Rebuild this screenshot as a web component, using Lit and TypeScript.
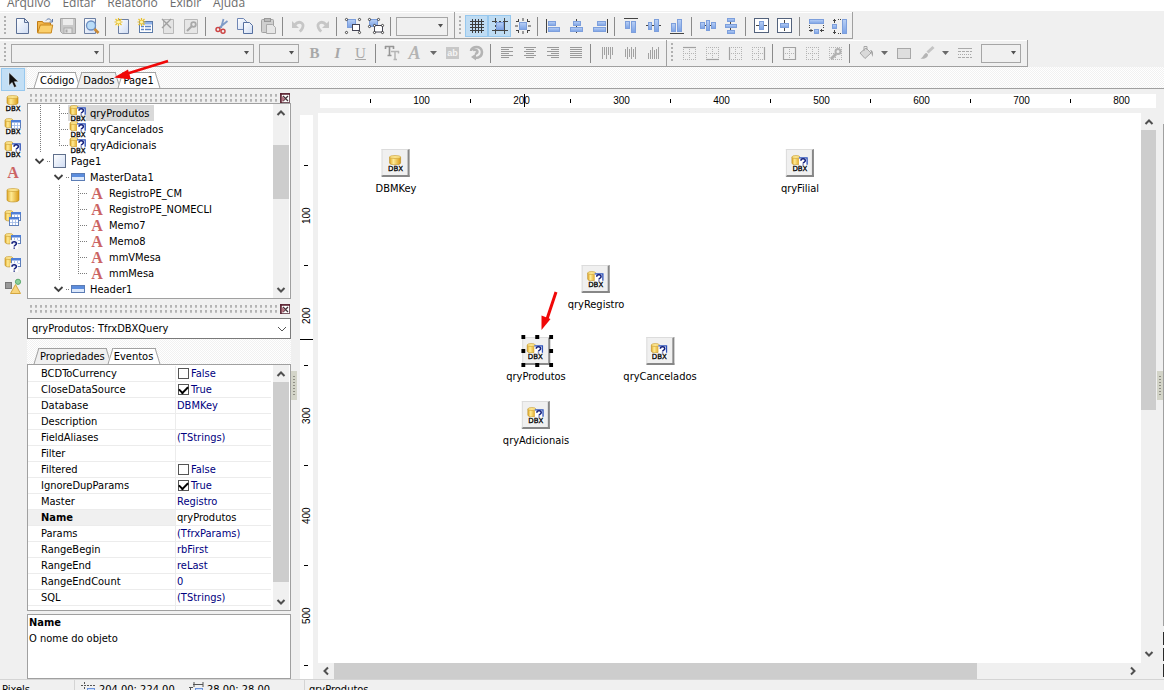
import { LitElement, html, svg, css, TemplateResult, SVGTemplateResult } from "lit";
import { customElement, state } from "lit/decorators.js";
import { classMap } from "lit/directives/class-map.js";

type Shape = SVGTemplateResult;

/* ---------- icon building blocks ---------- */

const cylinder = (x: number, y: number, w: number, h: number): Shape => svg`
  <path d="M${x} ${y + 2}v${h - 4}c0 2.6 ${w} 2.6 ${w} 0v-${h - 4}z" fill="url(#gold)" stroke="#b98a1c" stroke-width=".6"/>
  <ellipse cx=${x + w / 2} cy=${y + 2} rx=${w / 2} ry="1.5" fill="#fbe38c" stroke="#c79a2c" stroke-width=".6"/>`;

const grid = (x: number, y: number): Shape => svg`
  <rect x=${x + 0.5} y=${y + 0.5} width="9" height="8" fill="#fff" stroke="#5f7fb8"/>
  <rect x=${x} y=${y} width="10" height="2.5" fill="#4f7fd6"/>
  <path d="M${x + 1} ${y + 5.5}h8M${x + 3.5} ${y + 3}v5M${x + 6.5} ${y + 3}v5" stroke="#9db7e4" stroke-width=".8"/>`;

const mark = (x: number, y: number): Shape => svg`
  <path d="M${x + 2} ${y + 3.8}c0-2.6 4.400-2.6 4.400 0c0 1.400-2.200 1.200-2.200 2.700M${x + 4.2} ${y + 7.4}v1.300" fill="none" stroke="#14207c" stroke-width="1.5"/>`;

const query = (x: number, y: number): Shape => svg`
  <rect x=${x} y=${y} width="9" height="8" fill="#fff"/>
  <path d="M${x} ${y + 0.8}h8.2v7" fill="none" stroke="#2b50b8" stroke-width="1.300"/>
  ${mark(x, y)}`;

const dbx = svg`<rect x="0" y="10" width="16" height="6" fill="#fff" fill-opacity=".5"/><text class="dbx" x="8" y="16" text-anchor="middle">DBX</text>`;

const star = svg`
  <path d="M4.500 0v8M.5 4h8M1.500 1l6 6M7.500 1l-6 6" stroke="#e9c02c" stroke-width="1.2"/>
  <circle cx="4.500" cy="4" r="1.600" fill="#fff6ae"/>`;

const frameDots = (extra: string): Shape => svg`
  <path d="M2 2.500h13M2 8.500h13M2 14.500h13M2.500 2v13M8.500 2v13M14.500 2v13" stroke="#b4b4b4" stroke-dasharray="1 1"/>
  <path d=${extra} fill="none" stroke="#a2a2a2" stroke-width="1.2"/>`;

const lines = (spans: number[][]): Shape => svg`
  <path d=${spans.map(([a, b], i) => `M${a} ${2.5 + i * 2}H${b}`).join("")} stroke="#9a9a9a"/>`;

const bars = (spans: number[][]): Shape => svg`
  <path d=${spans.map(([a, b], i) => `M${3.5 + i * 2} ${a}V${b}`).join("")} stroke="#a2a2a2"/>`;

const box = (x: number, y: number, w: number, h: number, fill = "url(#blue)"): Shape =>
  svg`<rect x=${x + 0.5} y=${y + 0.5} width=${w - 1} height=${h - 1} fill=${fill} stroke="#7d9fdc"/>`;

const stroke = (d: string, color = "#444"): Shape =>
  svg`<path d=${d} fill="none" stroke=${color}/>`;

const nodes = (pts: number[][]): Shape =>
  svg`${pts.map(([x, y]) => svg`<circle cx=${x} cy=${y} r="1.100" fill="#fff" stroke="#333" stroke-width=".9"/>`)}`;

const icons: Record<string, Shape> = {
  file: svg`<path d="M2.500.5h8l4 4v11h-12z" fill="url(#paper)" stroke="#5b6f95"/><path d="M10.500.5v4h4z" fill="#dfe8f8" stroke="#5b6f95"/>`,
  open: svg`<path d="M.5 14.500v-11h5l1 1.500h7v3" fill="#f3b74a" stroke="#c07b15"/><path d="M.7 15l2.600-8h12.400l-1.500 8z" fill="#fbcf6b" stroke="#c9871c"/><path d="M9 2.500c2-2.600 4.500-1.800 5.500.7M15.500 1v3h-3" fill="none" stroke="#5a76a8"/>`,
  save: svg`<path d="M.5.5h15v15h-13l-2-2z" fill="#c9c9c9" stroke="#a6a6a6"/><rect x="3" y="1" width="10" height="6" fill="#ececec"/><rect x="4" y="10" width="8" height="5.500" fill="#e2e2e2" stroke="#aaa"/><rect x="5.500" y="11.500" width="2" height="3" fill="#aaa"/>`,
  preview: svg`<path d="M1.500.5h11v15h-11z" fill="url(#paper)" stroke="#6c7fa3"/><circle cx="8" cy="7.500" r="4.500" fill="#b9dcf8" stroke="#6d8fc2" stroke-width="1.300"/><path d="M11.500 11l4 4" stroke="#c98a37" stroke-width="2.600"/>`,
  newPage: svg`<path d="M4.500 1.500h10v14h-10z" fill="url(#paper)" stroke="#6c7fa3"/>${star}`,
  newDialog: svg`<rect x="2.500" y="3.500" width="13" height="11" fill="#fff" stroke="#5b7aa8"/><rect x="3" y="4" width="12" height="2.500" fill="#8fb2ea"/><path d="M4 8.500h3M8 8.500h6M4 11.500h3M8 11.500h6" stroke="#5f86c6" stroke-width="1.500"/>${star}`,
  remove: svg`<path d="M3.500 1.500h10v14h-10z" fill="#e4e4e4" stroke="#b8b8b8"/><path d="M2 1l9 9M11 1l-9 9" stroke="#a0a0a0" stroke-width="1.400"/>`,
  settings: svg`<path d="M1.500 1.500h13v14h-13z" fill="#e6e6e6" stroke="#b8b8b8"/><path d="M4 13l5-5" stroke="#a8a8a8" stroke-width="2.200"/><circle cx="10.500" cy="6.500" r="2.300" fill="none" stroke="#a8a8a8" stroke-width="1.800"/>`,
  cut: svg`<path d="M9.500 1L7 10M13.500 3L5 10" stroke="#7f9cc8" stroke-width="1.800"/><circle cx="4" cy="11.500" r="2" fill="none" stroke="#cc4444" stroke-width="1.500"/><circle cx="9" cy="13.200" r="2" fill="none" stroke="#cc4444" stroke-width="1.500"/>`,
  copy: svg`<path d="M.5.5h6l3 3v8h-9z" fill="url(#paper)" stroke="#7086b4"/><path d="M6.500 4.500h6l3 3v8h-9z" fill="url(#paper)" stroke="#556f9f"/>`,
  paste: svg`<rect x="1.500" y="1.500" width="12" height="13" rx="1" fill="#cfcfcf" stroke="#a2a2a2"/><rect x="4.500" y=".5" width="6" height="3" fill="#bbb" stroke="#999"/><path d="M6.500 6.500h6l3 3v6h-9z" fill="#e6e6e6" stroke="#aaa"/>`,
  undo: svg`<path d="M4 6.500c4-4.500 10-1.500 7.500 3.500c-.6 1.500-1.500 2.500-2.800 3.500" fill="none" stroke="#c6c6c6" stroke-width="2.800"/><path d="M1 3v7h7z" fill="#c6c6c6"/>`,
  redo: svg`<path d="M12 6.500c-4-4.500-10-1.500-7.500 3.500c.6 1.500 1.500 2.500 2.800 3.500" fill="none" stroke="#c6c6c6" stroke-width="2.800"/><path d="M15 3v7h-7z" fill="#c6c6c6"/>`,
  group: svg`${box(2, 1, 9, 9)}<rect x="7.500" y="6.500" width="7" height="6" fill="#fff" stroke="#445"/>${nodes([[1.500, 1.500], [14.500, 1.500], [1.500, 14.500], [14.500, 14.500]])}`,
  ungroup: svg`${box(1, 1, 9, 8)}<rect x="6.500" y="7.500" width="8" height="6.500" fill="#fff" stroke="#445"/>${nodes([[1.500, 1.500], [10.500, 1.500], [1.500, 8.500], [6.500, 7.500], [14.500, 7.500], [6.500, 14.500], [14.500, 14.500]])}`,
  grid: stroke("M1 3.500h14M1 6.500h14M1 9.500h14M1 12.500h14M3.500 1v14M6.500 1v14M9.500 1v14M12.500 1v14", "#3c3c3c"),
  gridAlign: svg`${box(4, 4, 8, 8)}${stroke("M0 3.500h5M7 3.500h2M11 3.500h5M0 12.500h16M3.500 0v5M3.500 7v2M3.500 11v5M12.500 0v16")}`,
  gridFit: svg`${box(4, 4, 8, 8)}${stroke("M1 3.500h3M12 3.500h3M1 12.500h3M12 12.500h3M3.500 1v3M12.500 1v3M3.500 12v3M12.500 12v3M8 0v3M8 13v3M0 8h3M13 8h3")}`,
  alignLeft: svg`${box(2, 3, 8, 5)}${box(2, 9, 12, 5)}${stroke("M.5 1v14")}`,
  alignCenter: svg`${stroke("M7.500 1v14")}${box(4, 3, 8, 5)}${box(1, 9, 13, 5)}`,
  alignRight: svg`${box(5, 3, 9, 5)}${box(1, 9, 13, 5)}${stroke("M15.500 1v14")}`,
  alignTop: svg`${box(2, 3, 5, 8)}${box(8, 3, 5, 12)}${stroke("M1 .5h14")}`,
  alignMiddle: svg`${stroke("M0 7.500h15")}${box(2, 4, 4, 8)}${box(8, 1, 5, 13)}`,
  alignBottom: svg`${box(2, 5, 5, 9)}${box(8, 1, 5, 13)}${stroke("M1 15.500h14")}`,
  spaceH: svg`${stroke("M3 7.500h10")}${box(0, 4, 5, 7)}${box(6, 2, 4, 11)}${box(11, 4, 5, 7)}`,
  spaceV: svg`${stroke("M7.500 3v10")}${box(4, 0, 8, 4)}${box(2, 6, 12, 4)}${box(4, 12, 8, 4)}`,
  centerH: svg`<rect x=".5" y=".5" width="14" height="14" fill="#fff" stroke="#53627c"/>${stroke("M2 7.500h11")}${box(5, 3, 5, 9)}`,
  centerV: svg`<rect x=".5" y=".5" width="14" height="14" fill="#fff" stroke="#53627c"/>${stroke("M7.500 2v11")}${box(3, 5, 9, 5)}`,
  sameW: svg`${box(1, 1, 15, 5)}${box(6, 11, 5, 5)}${stroke("M1.500 7v1M1.500 9v1M15.500 7v1M15.500 9v1M1 12.500h4M12 12.500h4M3 11v3M13.500 11v3")}`,
  sameH: svg`${box(11, 1, 5, 15)}${box(1, 6, 5, 5)}${stroke("M7 1.500h1M9 1.500h1M7 15.500h1M9 15.500h1M3.500 1v4M3.500 12v4M2 2.500h3M2 14.500h3")}`,
  fontKind: svg`<path d="M1 1.500h9M5.500 1v10M3.500 10.500h4M1.500 1v3M9.500 1v3" fill="none" stroke="#969696" stroke-width="1.600"/><path d="M7 6.500h8M11 6v9M9.500 14.500h3.500M14.500 6v2.500" fill="none" stroke="#b5b5b5" stroke-width="1.500"/>`,
  highlight: svg`<rect x="1" y="2" width="13" height="12" fill="#c8c8c8"/><text class="ab" x="7.500" y="11" text-anchor="middle">ab</text>`,
  rotate: svg`<path d="M3 6c0-5 11-6 11 1c0 4-3 6-7 6M5 5c5-1 6 3 2 4" fill="none" stroke="#b4b4b4" stroke-width="2.600"/><path d="M3 12l5-3.500v7z" fill="#b4b4b4"/>`,
  textLeft: lines([[2, 14], [2, 10], [2, 14], [2, 10], [2, 14], [2, 10]]),
  textCenter: lines([[2, 14], [4, 12], [2, 14], [4, 12], [2, 14], [4, 12]]),
  textRight: lines([[2, 14], [6, 14], [2, 14], [6, 14], [2, 14], [6, 14]]),
  textJustify: lines([[2, 14], [2, 14], [2, 14], [2, 14], [2, 14], [2, 14]]),
  vTop: bars([[2, 14], [2, 10], [2, 14], [2, 10], [2, 14], [2, 10]]),
  vMiddle: bars([[4, 12], [2, 14], [4, 12], [2, 14], [4, 12], [2, 14]]),
  vBottom: bars([[8, 14], [5, 14], [2, 14], [5, 14], [4, 14], [2, 14]]),
  frameTop: frameDots("M2 2.500h13"),
  frameBottom: frameDots("M2 14.500h13"),
  frameLeft: frameDots("M2.500 2v13"),
  frameRight: frameDots("M14.500 2v13"),
  frameAll: svg`${frameDots("M2.500 2.500h12v12h-12z")}`,
  frameNone: frameDots(""),
  frameEdit: svg`${frameDots("")}<path d="M4 14l5-5" stroke="#b2b2b2" stroke-width="3"/><circle cx="11" cy="6.500" r="2.500" fill="none" stroke="#b2b2b2" stroke-width="2"/>`,
  bucket: svg`<path d="M2 8l6-5 5 5-6 5.500z" fill="#d9d9d9" stroke="#a6a6a6"/><path d="M6 6V1.500h3V5" fill="none" stroke="#a6a6a6"/><path d="M12 5c3 0 3.500 3 2.500 7c-1-3-1-5-2.500-7z" fill="#9c9c9c"/>`,
  frameColor: svg`<rect x="1.500" y="3.500" width="13" height="10" fill="#dedede" stroke="#a8a8a8"/>`,
  brush: svg`<path d="M14.500 2l-6 5.500" stroke="#c4c4c4" stroke-width="3" fill="none"/><path d="M1.500 13.500c3-1 3-5 6-5.500l1.500 1.500c0 3-3.500 5-7.500 4z" fill="#b4b4b4"/>`,
  frameStyle: svg`<path d="M1 3.500h14" stroke="#aaa"/><path d="M1 6.500h14M1 12.500h14" stroke="#aaa" stroke-dasharray="3 1"/><path d="M1 9.500h14" stroke="#aaa" stroke-dasharray="1 1"/>`,
  pointer: svg`<path d="M4 .5v13l3-3 2.200 5 2.400-1-2.200-4.800h4.100z" fill="#111" stroke="#fff" stroke-width=".5"/>`,
  dbxBase: svg`${cylinder(2, 0, 11, 10)}${dbx}`,
  dbxTable: svg`${cylinder(0, 0, 8, 10)}${grid(6, 2)}${dbx}`,
  dbxQuery: svg`${cylinder(0, 0, 8, 10)}${query(7, 2)}${dbx}`,
  letter: svg`<text class="memo" x="8" y="14" text-anchor="middle">A</text>`,
  base: cylinder(2, 1, 12, 14),
  table: svg`${cylinder(0, 0, 8, 11)}${grid(6, 2)}${grid(4, 7)}`,
  tableQuery: svg`${cylinder(0, 0, 8, 11)}${grid(6, 2)}<rect x="5" y="7" width="8" height="9" fill="#fff" fill-opacity=".8"/>${mark(5, 7)}`,
  shapes: svg`<rect x=".5" y="3.500" width="6" height="6" fill="#999" stroke="#777"/><circle cx="13" cy="2.800" r="2.600" fill="#8ccf9a" stroke="#5ba86c"/><path d="M5.500 14.500l5-9 5 9z" fill="#f8d57c" stroke="#d4a63e"/>`,
  page: svg`<rect x="2.500" y="1.500" width="12" height="13" fill="url(#paper)" stroke="#60708c"/>`,
  band: svg`<rect x="1.500" y="4.500" width="13" height="7" fill="#dce8fb" stroke="#5b7cb4"/><rect x="2" y="5" width="12" height="3" fill="#5c8ddd"/>`,
  position: svg`<path d="M0 3.500h2M3 3.500h2M6 3.500h2M9 3.500h2M12 3.500h2M3.500 0v2M3.500 5v2M3.500 8v2M3.500 11v2" stroke="#555"/><rect x="6.500" y="6.500" width="7" height="7" fill="#cfe0fb" stroke="#6c94dd"/>`,
  size: svg`<path d="M4 2.500h10M5 0v5M14 0v5M1.500 5v9M0 5.500h4" stroke="#555"/><rect x="6.500" y="6.500" width="7" height="7" fill="#cfe0fb" stroke="#6c94dd"/>`,
};

const icon = (name: string) =>
  html`<svg class="icon" width="16" height="16" viewBox="0 0 16 16" aria-hidden="true">${icons[name]}</svg>`;

const chevron = (d: string) =>
  html`<svg width="10" height="10" viewBox="0 0 10 10" aria-hidden="true"><path d=${d} fill="none" stroke="#505050" stroke-width="2"/></svg>`;
const UP = "M1.500 7L5 3.500 8.500 7";
const DOWN = "M1.500 3L5 6.500 8.500 3";
const LEFT = "M7 1.500L3.500 5 7 8.500";
const RIGHT = "M3 1.500L6.500 5 3 8.500";

/* ---------- data ---------- */

const menu = ["Arquivo", "Editar", "Relatório", "Exibir", "Ajuda"];

const bars1 = [
  ["file", "open", "save", "preview", "|", "newPage", "newDialog", "remove", "settings", "|", "cut", "copy", "paste", "|", "undo", "redo", "|", "group", "ungroup", "|", "select:52"],
  ["grid*", "gridAlign*", "gridFit", "|", "alignLeft", "alignCenter", "alignRight", "|", "alignTop", "alignMiddle", "alignBottom", "|", "spaceH", "spaceV", "|", "centerH", "centerV", "|", "sameW", "sameH"],
];
const bars2 = [
  ["select:93", "select:145", "select:40", "text:bold:B", "text:italic:I", "text:under:U", "|", "fontKind", "text:color:A", "drop", "highlight", "rotate", "|", "textLeft", "textCenter", "textRight", "textJustify", "|", "vTop", "vMiddle", "vBottom"],
  ["frameTop", "frameBottom", "frameLeft", "frameRight", "|", "frameAll", "frameNone", "frameEdit", "|", "bucket", "drop", "frameColor", "brush", "drop", "frameStyle", "gap", "select:40"],
];

const palette = ["pointer", "dbxBase", "dbxTable", "dbxQuery", "letter", "base", "table", "tableQuery", "tableQuery", "shapes"];

type Cell = "line" | "tee" | "end" | "open" | "none";
const tree: { cells: Cell[]; icon: string; label: string }[] = [
  { cells: ["line", "tee"], icon: "dbxQuery", label: "qryProdutos" },
  { cells: ["line", "tee"], icon: "dbxQuery", label: "qryCancelados" },
  { cells: ["line", "end"], icon: "dbxQuery", label: "qryAdicionais" },
  { cells: ["open"], icon: "page", label: "Page1" },
  { cells: ["none", "open"], icon: "band", label: "MasterData1" },
  { cells: ["none", "line", "tee"], icon: "letter", label: "RegistroPE_CM" },
  { cells: ["none", "line", "tee"], icon: "letter", label: "RegistroPE_NOMECLI" },
  { cells: ["none", "line", "tee"], icon: "letter", label: "Memo7" },
  { cells: ["none", "line", "tee"], icon: "letter", label: "Memo8" },
  { cells: ["none", "line", "tee"], icon: "letter", label: "mmVMesa" },
  { cells: ["none", "line", "end"], icon: "letter", label: "mmMesa" },
  { cells: ["none", "open"], icon: "band", label: "Header1" },
];

const props: [string, string | boolean][] = [
  ["BCDToCurrency", false],
  ["CloseDataSource", true],
  ["Database", "DBMKey"],
  ["Description", ""],
  ["FieldAliases", "(TStrings)"],
  ["Filter", ""],
  ["Filtered", false],
  ["IgnoreDupParams", true],
  ["Master", "Registro"],
  ["Name", "qryProdutos"],
  ["Params", "(TfrxParams)"],
  ["RangeBegin", "rbFirst"],
  ["RangeEnd", "reLast"],
  ["RangeEndCount", "0"],
  ["SQL", "(TStrings)"],
  ["", ""],
];

const canvas = [
  { label: "DBMKey", icon: "dbxBase", x: 78, y: 36 },
  { label: "qryFilial", icon: "dbxQuery", x: 482, y: 36 },
  { label: "qryRegistro", icon: "dbxQuery", x: 278, y: 152 },
  { label: "qryProdutos", icon: "dbxQuery", x: 218, y: 224 },
  { label: "qryCancelados", icon: "dbxQuery", x: 342, y: 224 },
  { label: "qryAdicionais", icon: "dbxQuery", x: 218, y: 288 },
];

@customElement("app-root")
export class AppRoot extends LitElement {
  @state() private page = "Dados";
  @state() private sheet = "Propriedades";
  @state() private selected = "qryProdutos";

  static styles = css`
    :host {
      display: flex;
      flex-direction: column;
      height: 100vh;
      overflow: hidden;
      position: relative;
      background: #f0f0f0;
      color: #000;
      font: 11px/16px "DejaVu Sans Condensed", "DejaVu Sans", sans-serif;
      font-stretch: condensed;
      --edge: #a0a0a0;
      --checker: repeating-conic-gradient(#fff 0 25%, #f1f1f1 0 50%) 0 0 / 2px 2px;
    }
    * { box-sizing: border-box; }
    button {
      font: inherit; color: inherit; background: none; border: 0; padding: 0; margin: 0;
    }
    svg { display: block; flex: none; }
    .icon { overflow: visible; }
    .defs { position: absolute; width: 0; height: 0; }
    .dbx { font: 7px "DejaVu Sans", sans-serif; fill: #000; stroke: #000; stroke-width: 0.3px; }
    .ab { font: bold 9px "Liberation Sans", sans-serif; fill: #f4f4f4; }
    .memo { font: bold 16px "Liberation Serif", serif; fill: #cb6464; }

    .menu {
      display: flex; align-items: flex-end; gap: 12px;
      height: 11px; flex: none; overflow: hidden;
      background: #fff; padding-left: 7px;
      font: 12px/16px "Open Sans", sans-serif; color: #6c6c6c;
    }
    .bars { display: flex; flex: none; height: 28px; }
    .bars { padding-top: 1px; }
    .bar {
      display: flex; align-items: center;
      border: solid var(--edge); border-width: 0 1px 1px 0;
      box-shadow: inset 0 1px #fff;
      padding: 2px 2px 0 0;
    }
    .bars + .bars .bar { padding-top: 0; }
    .grip {
      width: 3px; height: 20px; margin: 0 3px 0 4px;
      background: radial-gradient(circle at 1px 1px, #b0b0b0 1px, transparent 1px) 0 0 / 3px 4px;
    }
    .tool {
      display: flex; align-items: center; justify-content: center;
      width: 23px; height: 22px;
    }
    .tool.on { background: #bfdcf3; box-shadow: inset 0 0 0 1px #97c8ee; }
    .drop { display: flex; align-items: center; justify-content: center; width: 15px; height: 22px; }
    .sep { width: 1px; height: 19px; margin: 0 4px 0 3px; background: #8a8a8a; }
    .gap { width: 4px; }
    .glyph { font: bold 15px/20px "Liberation Serif", serif; color: #a8a8a8; }
    .glyph.italic { font-style: italic; }
    .glyph.under { font-weight: normal; text-decoration: underline; }
    .glyph.color { font-size: 18px; font-style: italic; color: #b4b4b4; }
    .combo { display: grid; align-items: center; height: 19px; margin: 0 4px 0 1px; }
    .combo > * { grid-area: 1 / 1; }
    .combo select {
      appearance: none; width: 100%; height: 100%; border: 1px solid #a6a6a6;
      border-radius: 0; background: #f0f0f0; padding: 0 4px; margin: 0; font: inherit; color: #000;
    }
    .combo svg { justify-self: end; margin-right: 4px; pointer-events: none; }

    .work { display: flex; flex: 1; min-height: 0; }
    .palette { display: flex; flex-direction: column; width: 27px; flex: none; padding: 1px 0 0 1px; }
    .palette .tool { height: 23px; width: 24px; }
    .palette .tool.on { background: #c3dff5; }
    .main { display: flex; flex-direction: column; flex: 1; min-width: 0; }

    .tabs {
      display: flex; align-items: flex-end; flex: none;
      padding-left: 6px; background: var(--checker);
      border-bottom: 1px solid var(--edge);
    }
    .tabs.pages { height: 22px; }
    .tabs.sheets { height: 26px; }
    .tab {
      position: relative; z-index: 0; height: 16px; padding: 0 7px; margin-right: -5px;
      line-height: 17px;
    }
    .tab::before, .tab::after {
      content: ""; position: absolute; z-index: -1; top: 0; bottom: 0;
      background: #fff; border: solid var(--edge);
    }
    .tab::before { left: 3px; right: 9px; border-width: 1px 0 0 1px; transform: skewX(-17deg); }
    .tab::after { left: 9px; right: 3px; border-width: 1px 1px 0 0; transform: skewX(17deg); }
    .tab.on::before, .tab.on::after { background: #f0f0f0; }

    .split { display: flex; flex: 1; min-height: 0; }
    .side { display: flex; flex-direction: column; width: 264px; flex: none; }
    .dock { display: flex; align-items: center; gap: 3px; height: 14px; padding: 3px 1px 0 3px; flex: none; }
    .dock.second { height: 19px; padding-top: 1px; }
    .dots {
      flex: 1; height: 8px;
      background:
        radial-gradient(circle at 1px 1px, #b4b4b4 1px, transparent 1px) 0 0 / 5px 5px,
        radial-gradient(circle at 1px 1px, #c4c4c4 1px, transparent 1px) 0 1px / 5px 5px;
    }
    .panel { display: flex; border: 1px solid var(--edge); background: #fff; min-height: 0; overflow: hidden; }
    .tree { flex: none; height: 196px; }
    .rows { list-style: none; flex: 1; margin: 0; padding: 1px 0 0 2px; overflow: hidden; }
    .row { display: flex; height: 16px; }
    .cell { width: 19px; height: 16px; }
    .leaf { display: flex; align-items: center; white-space: nowrap; line-height: 17px; }
    .leaf .icon { margin: 0 4px 0 2px; }
    .leaf.on { background: #d9d9d9; padding-right: 4px; }

    .scroll {
      display: flex; flex-direction: column; align-items: center; justify-content: space-between;
      width: 16px; flex: none; background: #f0f0f0;
    }
    .side .scroll { margin-right: 1px; }
    .scroll button { display: flex; align-items: center; justify-content: center; width: 16px; height: 17px; flex: none; }
    .track { flex: 1; width: 100%; display: flex; flex-direction: column; }
    .thumb { background: #cdcdcd; }
    .scroll.flat { flex-direction: row; width: auto; height: 16px; }
    .scroll.flat .track { flex-direction: row; height: 100%; }
    .gap-a { flex: 24; } .thumb-a { flex: 54; } .gap-b { flex: 82; }
    .thumb-b { flex: 199; } .gap-c { flex: 11; }
    .thumb-c { flex: 279; } .gap-d { flex: 235; }
    .thumb-d { flex: 641; } .gap-e { flex: 147; }

    .object { height: 21px; margin: 0; flex: none; }
    .object select { background: #fff; border-color: #7a7a7a; padding: 0 4px; }
    .grid { flex: 1; border-top: 0; }
    .view { flex: 1; overflow: hidden; padding: 1px 2px 0 0; }
    table { width: 100%; border-collapse: separate; border-spacing: 0; table-layout: fixed; }
    th, td {
      height: 16px; padding: 0; border-bottom: 1px solid #ececec;
      text-align: left; font-weight: normal; line-height: 15px; white-space: nowrap;
    }
    th { width: 148px; padding-left: 13px; border-right: 1px solid #ececec; }
    td { color: #000080; padding-left: 1px; }
    tr.on th { font-weight: bold; background: #f0f0f0; }
    tr.on td { color: #000; }
    td label { display: flex; align-items: center; gap: 2px; height: 15px; }
    td input {
      appearance: none; width: 11px; height: 11px; margin: 0 0 0 1px;
      border: 1px solid #555; background: #fff; display: grid; place-items: center;
    }
    td input:checked::before {
      content: ""; width: 7px; height: 4px; margin-bottom: 2px;
      border: solid #000; border-width: 0 0 2px 2px; transform: rotate(-45deg);
    }
    .hint { display: block; flex: none; height: 65px; margin-top: 3px; padding: 0 1px; }
    .hint b, .hint span { display: block; }

    .sash { width: 9px; flex: none; padding-top: 282px; }
    .handle {
      width: 6px; height: 29px; padding: 5px 2px;
      background: repeating-linear-gradient(#8f8f84 0 1px, transparent 1px 3px) content-box, #d3d4c8;
    }

    .stage {
      display: grid; flex: 1; min-width: 0;
      grid-template: 14px 5px minmax(0, 1fr) / 13px 5px minmax(0, 1fr);
      padding-top: 5px;
    }
    .ruler { display: flex; background: #fff; overflow: hidden; position: relative; font: 10px/14px "Liberation Sans", sans-serif; }
    .ruler.top { grid-area: 1 / 3; margin: 0 0 0 2px; padding-left: 25px; }
    .ruler.left { grid-area: 3 / 1; flex-direction: column; margin-top: 2px; padding-top: 26px; }
    .ruler span { flex: none; display: flex; align-items: center; justify-content: center; }
    .top span { width: 50px; padding-left: 3px; }
    .left span { height: 50px; writing-mode: vertical-rl; transform: rotate(180deg); }
    .top i { width: 1px; height: 4px; background: #000; margin-right: 3px; }
    .left i { width: 4px; height: 1px; background: #000; }
    .mark { position: absolute; background: #000; }
    .top .mark { left: 204px; top: 0; width: 1px; height: 13px; }
    .left .mark { top: 224px; left: 0; width: 13px; height: 1px; }
    .board { grid-area: 3 / 3; display: flex; min-width: 0; min-height: 0; }
    .sheetwrap { display: flex; flex-direction: column; flex: 1; min-width: 0; }
    .surface { position: relative; flex: 1; background: #fff; overflow: hidden; }
    .board > .scroll { width: 15px; padding-bottom: 17px; }
    .rail { display: flex; justify-content: space-between; width: 8px; flex: none; padding-left: 1px; }
    .rail .handle { margin-top: 282px; }
    .edge { width: 1px; display: flex; flex-direction: column; gap: 3px; padding: 35px 0 2px; }
    .edge b { height: 13px; background: #2a2a2a; }
    .edge i { flex: 1; background: var(--edge); margin-bottom: 3px; }

    .node {
      position: absolute; display: flex; flex-direction: column; align-items: center; gap: 4px;
      transform: translateX(-50%); white-space: nowrap;
    }
    .chip {
      position: relative; display: grid; place-items: center; width: 28px; height: 28px;
      background: #f0f0f0; border: solid; border-width: 1px 2px 2px 1px;
      border-color: #dcdcdc #878787 #878787 #dcdcdc;
    }
    .handles { position: absolute; left: -2px; top: -3px; }
    .arrow { position: absolute; pointer-events: none; z-index: 2; }
    .arrow.tabs-arrow { left: 112px; top: 58px; }
    .arrow.node-arrow { left: 222px; top: 176px; }

    .status {
      display: flex; align-items: flex-start; flex: none; height: 11px; overflow: hidden;
      border-top: 1px solid #d4d4d4; white-space: nowrap;
    }
    .status > span { display: flex; gap: 3px; padding-top: 2px; height: 18px; border-right: 1px solid #d4d4d4; }
    .status .unit { width: 75px; padding-left: 2px; }
    .status .coords { width: 230px; padding-left: 6px; }
    .status .pair { display: flex; gap: 2px; width: 105px; }
    .status .name { flex: 1; padding-left: 4px; border: 0; }
  `;

  private combo(width: number) {
    return html`<span class="combo" style="width:${width}px">
      <select aria-label="Opções"></select>
      <svg width="7" height="4"><path d="M1 0h5L3.500 3.500z" fill="#505050" /></svg>
    </span>`;
  }

  private item(name: string): TemplateResult {
    if (name === "|") return html`<span class="sep"></span>`;
    if (name === "gap") return html`<span class="gap"></span>`;
    if (name === "drop")
      return html`<button class="drop" aria-label="Cores"><svg width="7" height="4"><path d="M0 0h7L3.500 4z" fill="#6a6a6a" /></svg></button>`;
    if (name.startsWith("select:")) return this.combo(Number(name.slice(7)));
    if (name.startsWith("text:")) {
      const [, kind, glyph] = name.split(":");
      return html`<button class="tool glyph ${kind}">${glyph}</button>`;
    }
    const on = name.endsWith("*");
    const key = on ? name.slice(0, -1) : name;
    return html`<button class=${classMap({ tool: true, on })} aria-label=${key}>${icon(key)}</button>`;
  }

  private bars(groups: string[][]) {
    return html`<div class="bars">
      ${groups.map((g) => html`<div class="bar" role="toolbar"><span class="grip"></span>${g.map((n) => this.item(n))}</div>`)}
    </div>`;
  }

  private tabs(kind: string, names: string[], current: string, pick: (n: string) => void) {
    return html`<div class="tabs ${kind}" role="tablist">
      ${names.map(
        (n) => html`<button role="tab" aria-selected=${n === current} class=${classMap({ tab: true, on: n === current })} @click=${() => pick(n)}>${n}</button>`
      )}
    </div>`;
  }

  private dock(second = false) {
    return html`<div class=${classMap({ dock: true, second })}>
      <span class="dots"></span>
      <button aria-label="Fechar">
        <svg width="10" height="10" viewBox="0 0 10 10">
          <rect x=".5" y=".5" width="9" height="9" fill="#fff" stroke="#7a5a64" />
          <path d="M0 1h10M1 0v10" stroke="#5a1f2e" stroke-width="1.500" />
          <path d="M3 3l5 5M8 3l-5 5" stroke="#45353b" stroke-width="1.300" />
          <path d="M2 3v6l3-3z" fill="#b87482" />
        </svg>
      </button>
    </div>`;
  }

  private scroll(parts: string[], flat = false) {
    return html`<div class=${classMap({ scroll: true, flat })}>
      <button aria-label="Anterior">${chevron(flat ? LEFT : UP)}</button>
      <div class="track">${parts.map((p) => html`<div class="${p} ${p.startsWith("thumb") ? "thumb" : ""}"></div>`)}</div>
      <button aria-label="Próximo">${chevron(flat ? RIGHT : DOWN)}</button>
    </div>`;
  }

  private cell(kind: Cell) {
    const paths: Record<Cell, string> = {
      line: "M10.500 0v16",
      tee: "M10.500 0v16M10 8.500h9",
      end: "M10.500 0v8M10 8.500h9",
      open: "M17 8.500h4",
      none: "",
    };
    return html`<svg class="cell icon" width="19" height="16">
      <path d=${paths[kind]} fill="none" stroke="#7c7c7c" stroke-dasharray="1 1" />
      ${kind === "open" ? svg`<path d="M5.500 6l4 4 4-4" fill="none" stroke="#404040" stroke-width="1.800"/>` : ""}
    </svg>`;
  }

  private ruler(side: string, count: number) {
    return html`<div class="ruler ${side}">
      ${Array.from({ length: count }, (_, i) => html`<span>${i % 2 ? (i + 1) * 50 : html`<i></i>`}</span>`)}
      <div class="mark"></div>
    </div>`;
  }

  private value(name: string, v: string | boolean) {
    if (typeof v === "string") return v;
    return html`<label><input type="checkbox" aria-label=${name} .checked=${v} />${v ? "True" : "False"}</label>`;
  }

  render() {
    return html`
      <svg class="defs" aria-hidden="true">
        <defs>
          <linearGradient id="blue" x1="0" y1="0" x2="0" y2="1"><stop offset="0" stop-color="#b9d0f5" /><stop offset="1" stop-color="#7ba2e6" /></linearGradient>
          <linearGradient id="paper" x1="0" y1="0" x2="1" y2="1"><stop offset="0" stop-color="#ffffff" /><stop offset="1" stop-color="#cfdcf3" /></linearGradient>
          <linearGradient id="gold"><stop offset="0" stop-color="#e0a828" /><stop offset=".35" stop-color="#ffeb94" /><stop offset="1" stop-color="#d99a14" /></linearGradient>
        </defs>
      </svg>
      <nav class="menu">${menu.map((m) => html`<button>${m}</button>`)}</nav>
      ${this.bars(bars1)} ${this.bars(bars2)}
      <div class="work">
        <div class="palette" role="toolbar">
          ${palette.map((p, i) => html`<button class=${classMap({ tool: true, on: i === 0 })} aria-label=${p}>${icon(p)}</button>`)}
        </div>
        <div class="main">
          ${this.tabs("pages", ["Código", "Dados", "Page1"], this.page, (n) => (this.page = n))}
          <div class="split">
            <div class="side">
              ${this.dock()}
              <div class="panel tree">
                <ul class="rows">
                  ${tree.map(
                    (t) => html`<li class="row" @click=${() => (this.selected = t.label)}>
                      ${t.cells.map((c) => this.cell(c))}
                      <span class=${classMap({ leaf: true, on: t.label === this.selected })}>${icon(t.icon)}${t.label}</span>
                    </li>`
                  )}
                </ul>
                ${this.scroll(["gap-a", "thumb-a", "gap-b"])}
              </div>
              ${this.dock(true)}
              <span class="combo object">
                <select aria-label="Objeto"><option>qryProdutos: TfrxDBXQuery</option></select>
                <svg width="10" height="10" viewBox="0 0 10 10"><path d="M1 3l4 4 4-4" fill="none" stroke="#555" /></svg>
              </span>
              ${this.tabs("sheets", ["Propriedades", "Eventos"], this.sheet, (n) => (this.sheet = n))}
              <div class="panel grid">
                <div class="view">
                  <table>
                    <tbody>
                      ${props.map(
                        ([n, v]) => html`<tr class=${classMap({ on: n === "Name" })}><th scope="row">${n}</th><td>${this.value(n, v)}</td></tr>`
                      )}
                    </tbody>
                  </table>
                </div>
                ${this.scroll(["thumb-b", "gap-c"])}
              </div>
              <div class="panel hint"><b>Name</b><span>O nome do objeto</span></div>
            </div>
            <div class="sash"><div class="handle"></div></div>
            <div class="stage">
              ${this.ruler("top", 16)} ${this.ruler("left", 11)}
              <div class="board">
                <div class="sheetwrap">
                  <div class="surface">
                    ${canvas.map(
                      (n) => html`<div class="node" style="left:${n.x}px;top:${n.y}px">
                        <span class="chip">
                          ${icon(n.icon)}
                          ${n.label === this.selected
                            ? html`<svg class="handles" width="32" height="32">
                                ${[0, 14, 28].flatMap((x) => [0, 14, 28].filter((y) => x !== 14 || y !== 14).map((y) => svg`<rect x=${x} y=${y} width="4" height="4"/>`))}
                              </svg>`
                            : ""}
                        </span>
                        <span>${n.label}</span>
                      </div>`
                    )}
                    <svg class="arrow node-arrow" width="20" height="44" viewBox="0 0 20 44">
                      <path d="M16 3L7 30" stroke="#f00808" stroke-width="3" />
                      <path d="M1.500 41V26.500l9 3.500z" fill="#f00808" />
                    </svg>
                  </div>
                  ${this.scroll(["thumb-d", "gap-e"], true)}
                </div>
                ${this.scroll(["thumb-c", "gap-d"])}
              </div>
            </div>
            <div class="rail">
              <div class="handle"></div>
              <div class="edge"><i></i><b></b><b></b><b></b></div>
            </div>
          </div>
        </div>
      </div>
      <footer class="status">
        <span class="unit">Pixels</span>
        <span class="coords">
          <span class="pair">${icon("position")}204,00; 224,00</span>
          <span class="pair">${icon("size")}28,00; 28,00</span>
        </span>
        <span class="name">qryProdutos</span>
      </footer>
      <svg class="arrow tabs-arrow" width="60" height="24" viewBox="0 0 60 24">
        <path d="M56 3L14 16" stroke="#f00808" stroke-width="2.600" />
        <path d="M2 19.500L16 11.500l3 10z" fill="#f00808" />
      </svg>
    `;
  }
}
